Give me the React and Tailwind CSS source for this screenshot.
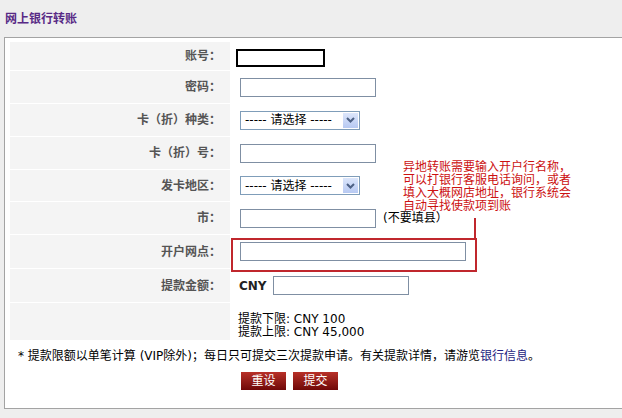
const font = { fontFamily: '"DejaVu Sans", "Noto Sans CJK SC", sans-serif' };

function Label({ children }) {
  return (
    <div className="w-[220px] shrink-0 bg-[#f4f4f4] flex items-center justify-end pr-[9px] text-[12px] font-bold text-[#555]">
      {children}
    </div>
  );
}

function TextBox({ w = "w-[136px]" }) {
  return <div className={`${w} h-[19px] border border-[#7f8fa3] bg-white`} />;
}

function Select() {
  return (
    <div className="w-[120px] h-[19px] border border-[#7f9db9] bg-white flex items-center justify-between pl-[4px] pr-[1px] text-[12px] text-black">
      <span>----- 请选择 -----</span>
      <span className="w-[15px] h-[15px] bg-gradient-to-b from-[#dce6fb] to-[#b7c9f2] flex items-center justify-center">
        <svg width="9" height="6" viewBox="0 0 9 6">
          <path d="M1 1l3.5 3.5L8 1" fill="none" stroke="#4d6185" strokeWidth="2" />
        </svg>
      </span>
    </div>
  );
}

function Row({ label, h, pl = "pl-[10px]", children, top = false }) {
  return (
    <div className={`flex ${h}`}>
      <Label>{label}</Label>
      <div className={`flex-1 flex ${top ? "items-start" : "items-center"} ${pl}`}>{children}</div>
    </div>
  );
}

export default function App() {
  return (
    <div className="relative w-[622px] h-[418px] overflow-hidden bg-[#eeeeee]" style={font}>
      <div className="h-[37px] px-[5px] flex items-center">
        <span className="text-[12px] font-bold text-[#582a86]">网上银行转账</span>
      </div>

      <div className="ml-[4px] w-[700px] h-[372px] bg-white border-l border-t border-b border-[#a3a3a3] pt-[4px] pl-[5px]">
        <div className="flex flex-col gap-px">
          <Row label="账号：" h="h-[28px]" pl="pl-[6px]">
            <div className="mt-[3px] w-[89px] h-[18px] border-2 border-black bg-white" />
          </Row>
          <Row label="密码：" h="h-[32px]">
            <TextBox />
          </Row>
          <Row label="卡（折）种类：" h="h-[32px]">
            <Select />
          </Row>
          <Row label="卡（折）号：" h="h-[32px]">
            <TextBox />
          </Row>
          <Row label="发卡地区：" h="h-[31px]">
            <Select />
          </Row>
          <Row label="市：" h="h-[32px]">
            <TextBox />
            <span className="ml-[7px] text-[12px] text-black">(不要填县）</span>
          </Row>
          <Row label="开户网点：" h="h-[33px]">
            <TextBox w="w-[226px]" />
          </Row>
          <Row label="提款金额：" h="h-[33px]" pl="pl-[9px]">
            <span className="text-[12px] font-bold text-[#222] mr-[6px]">CNY</span>
            <TextBox />
          </Row>
          <Row label="" h="h-[37px]" pl="pl-[8px]" top>
            <div className="pt-[10px] text-[12px] leading-[13px] text-black">
              <div>提款下限: CNY 100</div>
              <div>提款上限: CNY 45,000</div>
            </div>
          </Row>
        </div>

        <div className="mt-[9px] pl-[8px] text-[12px] leading-[15px] text-black">
          * 提款限额以单笔计算 (VIP除外)；每日只可提交三次提款申请。有关提款详情，请游览
          <span className="text-[#1c1c80]">银行信息</span>。
        </div>

        <div className="mt-[8px] pl-[231px] flex gap-[7px]">
          <button className="w-[45px] h-[18px] bg-gradient-to-b from-[#b83028] to-[#700808] text-white text-[12px] leading-[18px]">
            重设
          </button>
          <button className="w-[45px] h-[18px] bg-gradient-to-b from-[#b83028] to-[#700808] text-white text-[12px] leading-[18px]">
            提交
          </button>
        </div>
      </div>

      {/* annotation overlay */}
      <div className="absolute left-[403px] top-[161px] text-[12px] leading-[13px] text-[#cc1111]">
        <div>异地转账需要输入开户行名称，</div>
        <div>可以打银行客服电话询问，或者</div>
        <div>填入大概网店地址，银行系统会</div>
        <div>自动寻找使款项到账</div>
      </div>
      <div className="absolute left-[474px] top-[218px] w-[2px] h-[21px] bg-[#c0272d]" />
      <div className="absolute left-[231px] top-[238px] w-[246px] h-[34px] border-2 border-[#c0272d]" />
    </div>
  );
}
